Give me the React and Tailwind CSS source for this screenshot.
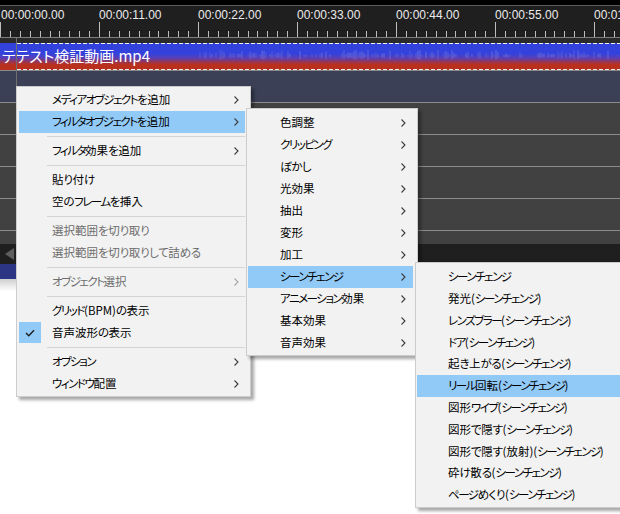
import React from 'react';

const mainItems = [
  { t: 'メディアオブジェクトを追加', a: true },
  { t: 'フィルタオブジェクトを追加', a: true, hl: true },
  'sep',
  { t: 'フィルタ効果を追加', a: true },
  'sep',
  { t: '貼り付け' },
  { t: '空のフレームを挿入' },
  'sep',
  { t: '選択範囲を切り取り', d: true },
  { t: '選択範囲を切り取りして詰める', d: true },
  'sep',
  { t: 'オブジェクト選択', d: true, a: true },
  'sep',
  { t: 'グリッド(BPM)の表示' },
  { t: '音声波形の表示', c: true },
  'sep',
  { t: 'オプション', a: true },
  { t: 'ウィンドウ配置', a: true },
];

const sub1 = ['色調整', 'クリッピング', 'ぼかし', '光効果', '抽出', '変形', '加工', 'シーンチェンジ', 'アニメーション効果', '基本効果', '音声効果'];

const sub2 = [
  'シーンチェンジ',
  '発光(シーンチェンジ)',
  'レンズブラー(シーンチェンジ)',
  'ドア(シーンチェンジ)',
  '起き上がる(シーンチェンジ)',
  'リール回転(シーンチェンジ)',
  '図形ワイプ(シーンチェンジ)',
  '図形で隠す(シーンチェンジ)',
  '図形で隠す(放射)(シーンチェンジ)',
  '砕け散る(シーンチェンジ)',
  'ページめくり(シーンチェンジ)',
];

const times = ['00:00:00.00', '00:00:11.00', '00:00:22.00', '00:00:33.00', '00:00:44.00', '00:00:55.00', '00:01:06.00'];

// Split a label into runs so that kana (narrow in the original UI font) can be tightened.
function Label({ text }) {
  const runs = [];
  for (const ch of text) {
    const c = ch.codePointAt(0);
    const kind = c >= 0x30a0 && c <= 0x30ff ? 'k' : c >= 0x3040 && c <= 0x309f ? 'h' : 'o';
    const last = runs[runs.length - 1];
    if (last && last.kind === kind) last.s += ch;
    else runs.push({ kind, s: ch });
  }
  return runs.map((r, i) =>
    r.kind === 'k' ? (
      <span key={i} className="tracking-[-1.5px]">{r.s}</span>
    ) : r.kind === 'h' ? (
      <span key={i} className="tracking-[-0.5px]">{r.s}</span>
    ) : (
      <span key={i}>{r.s}</span>
    )
  );
}

function Chevron({ disabled }) {
  return (
    <svg width="5" height="8" viewBox="0 0 5 8" className="shrink-0">
      <path d="M0.5 0.5 L4 4 L0.5 7.5" fill="none" stroke={disabled ? '#a6a6a6' : '#3c3c3c'} strokeWidth="1.1" />
    </svg>
  );
}

function Check() {
  return (
    <svg width="10" height="8" viewBox="0 0 10 8">
      <path d="M1 4 L3.8 6.8 L9 1.2" fill="none" stroke="#1e1e1e" strokeWidth="1.4" />
    </svg>
  );
}

function Ruler() {
  const ticks = [];
  for (let k = 0; k < 64; k++) {
    const x = Math.round(k * 9.9) + 0.5;
    const major = k % 10 === 0;
    ticks.push(<line key={k} x1={x} x2={x} y1={major ? 16 : 25} y2={31} stroke="#bdbdbd" strokeWidth="1" />);
  }
  return (
    <div className="relative h-[31px] bg-[#1f1f1f] overflow-hidden">
      <div className="flex pt-[2px]">
        {times.map((t, i) => (
          <div key={i} className={`w-[99px] shrink-0 whitespace-nowrap text-[12px] leading-[14px] text-[#ececec] font-['Liberation_Sans',sans-serif] ${i === 0 ? 'pl-px' : ''}`}>
            {t}
          </div>
        ))}
      </div>
      <svg width="620" height="31" className="absolute left-0 top-0">
        {ticks}
      </svg>
    </div>
  );
}

function Wave() {
  const lines = [];
  let s = 7;
  const rnd = () => {
    s = (s * 9301 + 49297) % 233280;
    return s / 233280;
  };
  for (let x = 200; x < 620; x += 2) {
    const r = rnd();
    if (r < 0.35) continue;
    const h = 1 + rnd() * 5;
    lines.push(<line key={x} x1={x} x2={x} y1={13 - h} y2={13 + h * 0.6} stroke="#ffffff" strokeOpacity={0.12 + rnd() * 0.12} strokeWidth="1" />);
  }
  return lines;
}

function Clip() {
  return (
    <div className="relative h-[27px] bg-[linear-gradient(to_bottom,#3342dc_0%,#3342dc_40%,#5a3fb6_56%,#9a3552_70%,#b9301f_80%,#b9301f_100%)]">
      <svg width="620" height="27" className="absolute left-0 top-0">
        <Wave />
        <line x1="17" x2="620" y1="0.5" y2="0.5" stroke="#f0f0f0" strokeDasharray="4 2" />
        <line x1="17" x2="620" y1="26.5" y2="26.5" stroke="#f0f0f0" strokeDasharray="4 2" />
      </svg>
      <div className="relative pl-[2px] pt-[3px] text-[15px] leading-[20px] text-white font-['Noto_Sans_CJK_JP',sans-serif]">
        テテスト検証動画.mp4
      </div>
    </div>
  );
}

function Row({ h }) {
  return <div className={`bg-[#414141] ${h}`} />;
}

function MainMenu() {
  return (
    <div className="absolute left-[16px] top-[86px] w-[235px] border border-[#cccccc] bg-[#f2f2f2] pt-[2px] pb-[1px] shadow-[3px_3px_3px_rgba(0,0,0,0.35)]">
      {mainItems.map((it, i) =>
        it === 'sep' ? (
          <div key={i} className="h-[7px] pt-[3px] ml-[30px] mr-[5px]">
            <div className="h-px bg-[#d4d4d4]" />
          </div>
        ) : (
          <div key={i} className={`relative flex h-[22px] items-center ml-[2px] mr-[5px] pl-[33px] pr-[6px] ${it.hl ? 'bg-[#91c9f7]' : ''}`}>
            {it.c && (
              <div className="absolute left-0 top-0 flex h-[21px] w-[22px] items-center justify-center bg-[#91c9f7]">
                <Check />
              </div>
            )}
            <span className={`flex-1 whitespace-nowrap ${it.d ? 'text-[#6d6d6d]' : 'text-black'}`}>
              <Label text={it.t} />
            </span>
            {it.a && <Chevron disabled={it.d} />}
          </div>
        )
      )}
    </div>
  );
}

function SubMenu1() {
  return (
    <div className="absolute left-[246px] top-[108px] w-[172px] border border-[#cccccc] bg-[#f2f2f2] pt-[3px] pb-[1px] shadow-[3px_3px_3px_rgba(0,0,0,0.35)]">
      {sub1.map((t, i) => (
        <div key={i} className={`flex h-[22px] items-center ml-px mr-[4px] pl-[32px] pr-[7px] ${i === 7 ? 'bg-[#91c9f7]' : ''}`}>
          <span className="flex-1 whitespace-nowrap text-black">
            <Label text={t} />
          </span>
          <Chevron />
        </div>
      ))}
    </div>
  );
}

function SubMenu2() {
  return (
    <div className="absolute left-[415px] top-[262px] w-[230px] border border-[#cccccc] bg-[#f2f2f2] pt-[3px] pb-[1px] shadow-[3px_3px_3px_rgba(0,0,0,0.35)]">
      {sub2.map((t, i) => (
        <div key={i} className={`flex h-[21.8px] items-center ml-px pl-[31px] ${i === 5 ? 'bg-[#91c9f7]' : ''}`}>
          <span className="whitespace-nowrap text-black">
            <Label text={t} />
          </span>
        </div>
      ))}
    </div>
  );
}

export default function App() {
  return (
    <div className="relative h-[514px] w-[620px] overflow-hidden bg-white font-['Noto_Sans_CJK_JP',sans-serif] text-[11.5px] [font-feature-settings:'palt']">
      <div className="h-[5px] bg-black" />
      <div className="h-px bg-[#5c5c5c]" />
      <Ruler />
      <div className="h-px bg-[#7e7e7e]" />
      <div className="h-[5px] bg-[#2a2a2a]" />
      <Clip />
      <div className="h-px bg-[#8a8a8a]" />
      <div className="h-[31px] bg-[#3b4056]" />
      <div className="h-px bg-[#8c8c8c]" />
      <Row h="h-[31px]" />
      <div className="h-px bg-[#8c8c8c]" />
      <Row h="h-[31px]" />
      <div className="h-px bg-[#8c8c8c]" />
      <Row h="h-[31px]" />
      <div className="h-px bg-[#8c8c8c]" />
      <Row h="h-[31px]" />
      <div className="h-px bg-[#8c8c8c]" />
      <Row h="h-[13px]" />
      <div className="flex h-[20px] items-center bg-[#1f1f1f] pl-[5px]">
        <svg width="9" height="12" viewBox="0 0 9 12">
          <path d="M9 0 L0 6 L9 12 Z" fill="#5e5e5e" />
        </svg>
      </div>
      <div className="h-[15px] bg-[#2c3484]" />
      <div className="h-[12px] bg-[linear-gradient(to_bottom,#cfcfcf,#ffffff)]" />

      <div className="absolute left-[16px] top-[38px] h-[206px] w-px bg-[#6f6f6f]" />

      <MainMenu />
      <SubMenu1 />
      <SubMenu2 />
    </div>
  );
}
